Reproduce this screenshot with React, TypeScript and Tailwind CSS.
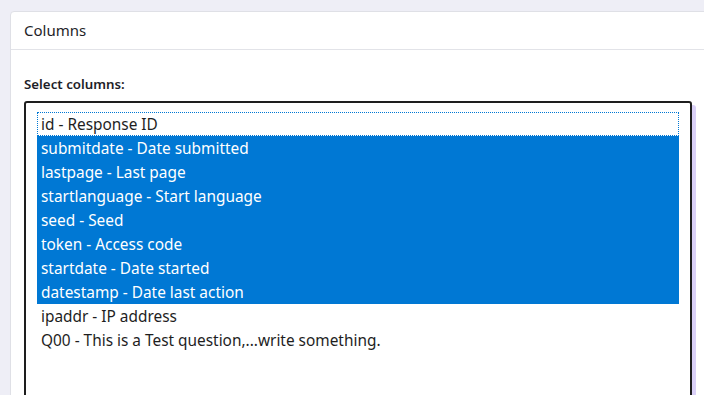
import React from "react";

const items = [
  { t: "id - Response ID", s: false, focus: true },
  { t: "submitdate - Date submitted", s: true },
  { t: "lastpage - Last page", s: true },
  { t: "startlanguage - Start language", s: true },
  { t: "seed - Seed", s: true },
  { t: "token - Access code", s: true },
  { t: "startdate - Date started", s: true },
  { t: "datestamp - Date last action", s: true },
  { t: "ipaddr - IP address", s: false },
  { t: "Q00 - This is a Test question,...write something.", s: false },
];

export default function App() {
  return (
    <div
      className="w-[704px] h-[395px] overflow-hidden bg-[#eeeef6] pl-[10px] pt-[11px]"
      style={{ fontFamily: '"Noto Sans", "Open Sans", sans-serif' }}
    >
      <div className="w-[720px] h-[420px] bg-white border border-[#dfe0e6] rounded-tl-[4px]">
        <div className="h-[38px] border-b border-[#e2e3e8] flex items-center pl-[13px] text-[15px] text-[#1e1e28]">
          Columns
        </div>
        <div className="pl-[13px] pt-[24px]">
          <div className="text-[13.3px] font-semibold text-[#1e1e28] leading-[20px] h-[27px]">
            Select columns:
          </div>
          <div className="w-[668px] h-[320px] border-2 border-[#1e1e1e] rounded-[3px] shadow-[4px_4px_0_#dad0f7] pt-[9px] px-[11px]">
            {items.map((it, i) => (
              <div
                key={i}
                className={
                  "h-[24px] pl-[4px] pt-[2px] text-[15.4px] leading-[22px] whitespace-nowrap " +
                  (it.s ? "bg-[#0078d4] text-white" : "text-[#1e1e1e]") +
                  (it.focus ? " outline outline-1 outline-dotted outline-[#0078d4] -outline-offset-1" : "")
                }
              >
                {it.t}
              </div>
            ))}
          </div>
        </div>
      </div>
    </div>
  );
}
